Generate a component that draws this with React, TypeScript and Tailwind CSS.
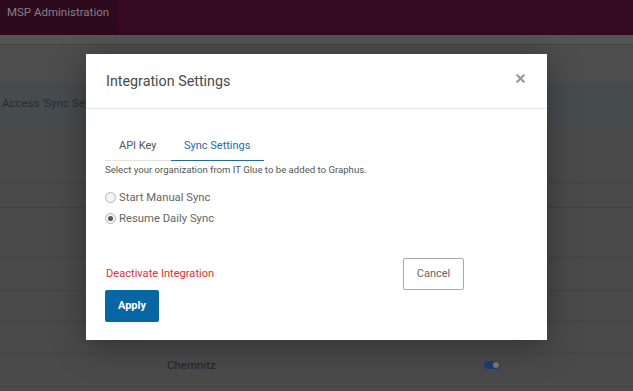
import { X } from "lucide-react";

const rows = [
  { h: "h-[58px]", label: "" },
  { h: "h-[25px]", label: "" },
  { h: "h-[50px]", label: "" },
  { h: "h-[33px]", label: "" },
  { h: "h-[31px]", label: "" },
  { h: "h-[32px]", label: "" },
  { h: "h-[33px]", label: "Chemnitz" },
  { h: "h-[10px]", label: "" },
];

function Radio({ checked }: { checked?: boolean }) {
  return (
    <span className="flex h-[11px] w-[11px] items-center justify-center rounded-full border border-[#b5b5b5] bg-[#f4f4f4]">
      {checked && <span className="h-[5px] w-[5px] rounded-full bg-[#555]" />}
    </span>
  );
}

export default function App() {
  return (
    <div className="relative h-[391px] w-[633px] overflow-hidden bg-[#4a4a4a] font-['Roboto',sans-serif]">
      <header className="flex h-[35px] bg-[#360a23]">
        <div className="w-[118px] whitespace-nowrap bg-[#2e0a1d] px-[7px] pt-[4px] text-[11.5px] text-[#8a7f85]">MSP Administration</div>
      </header>
      <div className="h-[10px] border-b border-[#434343] bg-[#535553]" />
      <div className="h-[38px] bg-[#4d4d4d]" />
      <div className="flex h-[42px] items-center bg-[#464b4e] px-[2px] text-[11.5px] text-[#2a2d30]">Access 'Sync Settings'</div>
      {rows.map((r, i) => (
        <div key={i} className={`${r.h} relative border-b border-[#424242]`}>
          {r.label && (
            <>
              <span className="absolute left-[167px] top-[3px] text-[11.5px] text-[#222]">{r.label}</span>
              <span className="absolute left-[484px] top-[7px] flex h-[8px] w-[16px] items-center justify-end rounded-full bg-[#1b3f72] pr-[1px]">
                <span className="h-[6px] w-[6px] rounded-full bg-[#777]" />
              </span>
            </>
          )}
        </div>
      ))}

      <div className="absolute left-[86px] top-[54px] h-[286px] w-[461px] bg-white shadow-[0_5px_30px_rgba(0,0,0,0.35)]">
        <div className="flex h-[55px] items-center justify-between border-b border-[#e5e5e5] pl-[20px] pr-[20px]">
          <h2 className="pt-[2px] text-[14.3px] text-[#4a4a4a]">Integration Settings</h2>
          <X className="mb-[6px] h-[13px] w-[13px] text-[#999]" strokeWidth={4} />
        </div>
        <div className="px-[19px] pt-[29px]">
          <div className="flex text-[11px] leading-[16px]">
            <div className="w-[66px] border-b border-[#e3e3e3] pb-[6px] pl-[14px] text-[#555]">API Key</div>
            <div className="w-[93px] border-b border-[#1f6aa5] pb-[6px] pl-[13px] text-[#1f6aa5]">Sync Settings</div>
          </div>
          <p className="mt-[2px] text-[9.6px] leading-[14px] text-[#555]">Select your organization from IT Glue to be added to Graphus.</p>
          <div className="mt-[12px] flex flex-col gap-[4px] text-[11.3px] leading-[17px] text-[#666]">
            <label className="flex items-center gap-[3px]">
              <Radio />
              Start Manual Sync
            </label>
            <label className="flex items-center gap-[3px]">
              <Radio checked />
              Resume Daily Sync
            </label>
          </div>
          <div className="mt-[31px] flex items-center justify-between pr-[64px]">
            <span className="pl-px text-[11.1px] text-[#ea2b2f]">Deactivate Integration</span>
            <button className="h-[32px] w-[61px] rounded-[2px] border border-[#a9a9a9] text-[11px] text-[#666]">Cancel</button>
          </div>
          <button className="h-[32px] w-[54px] rounded-[2px] bg-[#0866a4] text-[11px] font-bold text-white">Apply</button>
        </div>
      </div>
    </div>
  );
}
